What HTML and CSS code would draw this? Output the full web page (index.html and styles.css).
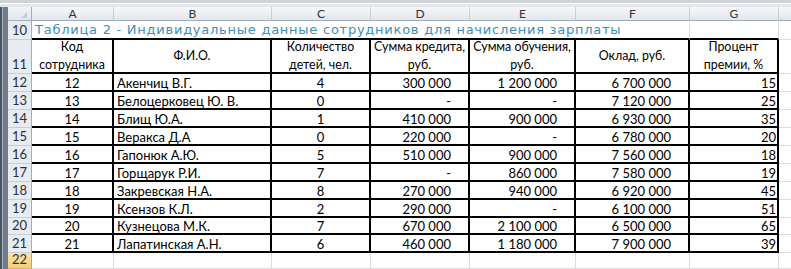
FILE: index.html
```html
<!DOCTYPE html>
<html lang="ru">
<head>
<meta charset="utf-8">
<title>Таблица 2</title>
<link rel="stylesheet" href="styles.css">
</head>
<body>
<div class="sheet">
  <div class="topbar"></div>
  <div class="main">
    <div class="frame"></div>
    <div class="grid">
      <div class="corner"><span class="tri"></span></div>
      <div class="ch">A</div><div class="ch">B</div><div class="ch">C</div><div class="ch">D</div><div class="ch">E</div><div class="ch">F</div><div class="ch">G</div><div class="ch last"></div>

      <div class="rh">10</div>
      <div class="c title tb">Таблица 2 - Индивидуальные данные сотрудников для начисления зарплаты</div>
      <div class="c tb"></div>
      <div class="c h"></div>

      <div class="rh">11</div>
      <div class="c t ctr wrap">Код<br>сотрудника</div>
      <div class="c t ctr wrap">Ф.И.О.</div>
      <div class="c t ctr wrap">Количество<br>детей, чел.</div>
      <div class="c t ctr wrap">Сумма кредита,<br>руб.</div>
      <div class="c t ctr wrap">Сумма обучения,<br>руб.</div>
      <div class="c t ctr wrap">Оклад, руб.</div>
      <div class="c t ctr wrap">Процент<br>премии, %</div>
      <div class="c h"></div>

      <div class="rh">12</div>
      <div class="c t ctr">12</div><div class="c t lft">Акенчиц В.Г.</div><div class="c t ctr">4</div><div class="c t num">300 000</div><div class="c t num">1 200 000</div><div class="c t num">6 700 000</div><div class="c t pct">15</div><div class="c h"></div>

      <div class="rh">13</div>
      <div class="c t ctr">13</div><div class="c t lft">Белоцерковец Ю. В.</div><div class="c t ctr">0</div><div class="c t num">-</div><div class="c t num">-</div><div class="c t num">7 120 000</div><div class="c t pct">25</div><div class="c h"></div>

      <div class="rh">14</div>
      <div class="c t ctr">14</div><div class="c t lft">Блищ Ю.А.</div><div class="c t ctr">1</div><div class="c t num">410 000</div><div class="c t num">900 000</div><div class="c t num">6 930 000</div><div class="c t pct">35</div><div class="c h"></div>

      <div class="rh">15</div>
      <div class="c t ctr">15</div><div class="c t lft">Веракса Д.А</div><div class="c t ctr">0</div><div class="c t num">220 000</div><div class="c t num">-</div><div class="c t num">6 780 000</div><div class="c t pct">20</div><div class="c h"></div>

      <div class="rh">16</div>
      <div class="c t ctr">16</div><div class="c t lft">Гапонюк А.Ю.</div><div class="c t ctr">5</div><div class="c t num">510 000</div><div class="c t num">900 000</div><div class="c t num">7 560 000</div><div class="c t pct">18</div><div class="c h"></div>

      <div class="rh">17</div>
      <div class="c t ctr">17</div><div class="c t lft">Горщарук Р.И.</div><div class="c t ctr">7</div><div class="c t num">-</div><div class="c t num">860 000</div><div class="c t num">7 580 000</div><div class="c t pct">19</div><div class="c h"></div>

      <div class="rh">18</div>
      <div class="c t ctr">18</div><div class="c t lft">Закревская Н.А.</div><div class="c t ctr">8</div><div class="c t num">270 000</div><div class="c t num">940 000</div><div class="c t num">6 920 000</div><div class="c t pct">45</div><div class="c h"></div>

      <div class="rh">19</div>
      <div class="c t ctr">19</div><div class="c t lft">Ксензов К.Л.</div><div class="c t ctr">2</div><div class="c t num">290 000</div><div class="c t num">-</div><div class="c t num">6 100 000</div><div class="c t pct">51</div><div class="c h"></div>

      <div class="rh">20</div>
      <div class="c t ctr">20</div><div class="c t lft">Кузнецова М.К.</div><div class="c t ctr">7</div><div class="c t num">670 000</div><div class="c t num">2 100 000</div><div class="c t num">6 500 000</div><div class="c t pct">65</div><div class="c h"></div>

      <div class="rh">21</div>
      <div class="c t ctr">21</div><div class="c t lft">Лапатинская А.Н.</div><div class="c t ctr">6</div><div class="c t num">460 000</div><div class="c t num">1 180 000</div><div class="c t num">7 900 000</div><div class="c t pct">39</div><div class="c h"></div>

      <div class="rh sel">22</div>
      <div class="c"></div><div class="c"></div><div class="c"></div><div class="c"></div><div class="c"></div><div class="c"></div><div class="c"></div><div class="c h"></div>
    </div>
  </div>
</div>
</body>
</html>
```
FILE: styles.css
```css
html, body {
  margin: 0;
  padding: 0;
  background: #ffffff;
}
body {
  font-family: Lato, "Open Sans", sans-serif;
  font-size: 13px;
  color: #000;
}
.sheet {
  width: 791px;
  height: 269px;
  overflow: hidden;
}
.topbar {
  height: 7px;
  background: linear-gradient(#cfd3d8 0, #cfd3d8 3px, #ffffff 3px, #ffffff 4px, #e3e6ea 4px, #e3e6ea 7px);
}
.main {
  display: flex;
}
.frame {
  width: 8px;
  flex: none;
  background: linear-gradient(90deg, #4b5563 0, #4b5563 2px, #a9b1bb 2px, #a9b1bb 3px, #6f7d8e 3px, #6f7d8e 8px);
}
.grid {
  display: grid;
  grid-template-columns: 24px 82px 158px 99px 99px 106px 114px 89px 12px;
  grid-template-rows: 14px 19px 34px repeat(8, 18px) 17px 18px 16px;
}
.corner {
  background: linear-gradient(#f3f5f7, #e2e6eb);
  border-right: 1px solid #9eadbf;
  border-bottom: 1px solid #9eadbf;
  box-sizing: border-box;
  position: relative;
}
.tri {
  position: absolute;
  right: 4px;
  bottom: 2px;
  width: 0;
  height: 0;
  border-left: 6px solid transparent;
  border-bottom: 6px solid #c9ced5;
}
.ch {
  background: linear-gradient(#f6f7f9, #e3e6ea);
  border-right: 1px solid #c8ced6;
  border-bottom: 1px solid #9eadbf;
  box-sizing: border-box;
  display: flex;
  align-items: center;
  justify-content: center;
  color: #2b3440;
  font-size: 12px;
  line-height: 13px;
}
.ch.last {
  border-right: none;
}
.rh {
  background: #e8ecf1;
  border-right: 1px solid #9eadbf;
  border-bottom: 1px solid #c8ced6;
  box-sizing: border-box;
  display: flex;
  align-items: flex-end;
  justify-content: center;
  color: #27303c;
  font-size: 13px;
  line-height: 17px;
}
.rh.sel {
  background: linear-gradient(#fbe3a8, #f6cd78);
  border-bottom-color: #d9b36a;
  border-right-color: #c9a25a;
}
.c {
  box-sizing: border-box;
  border-right: 1px solid #dadcdd;
  border-bottom: 1px solid #dadcdd;
  display: flex;
  align-items: center;
  white-space: nowrap;
  overflow: hidden;
  font-size: 13px;
  line-height: 16px;
  padding: 1px 3px 0;
}
.c.h {
  border-right: none;
}
.c.t {
  border-right: 2px solid #000;
  border-bottom: 2px solid #000;
}
.c.tb {
  border-bottom: 2px solid #000;
}
.title {
  grid-column: span 6;
  color: #3a8fc0;
  overflow: visible;
  padding-left: 3px;
  font-family: "DejaVu Sans", Verdana, sans-serif;
  font-size: 13px;
  letter-spacing: 0.75px;
}
.ctr {
  justify-content: center;
  text-align: center;
}
.lft {
  justify-content: flex-start;
}
.num {
  justify-content: flex-end;
  padding-right: 17px;
}
.pct {
  justify-content: flex-end;
  padding-right: 1px;
}
.wrap {
  line-height: 18px;
  padding-top: 0;
  font-size: 12.4px;
}
```
